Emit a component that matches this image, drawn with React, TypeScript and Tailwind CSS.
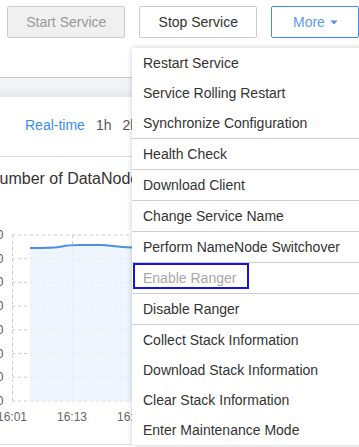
import React from "react";

const groups: string[][] = [
  ["Restart Service", "Service Rolling Restart", "Synchronize Configuration"],
  ["Health Check"],
  ["Download Client"],
  ["Change Service Name"],
  ["Perform NameNode Switchover"],
  ["Enable Ranger"],
  ["Disable Ranger"],
  ["Collect Stack Information", "Download Stack Information", "Clear Stack Information", "Enter Maintenance Mode"],
];

const gridY = [11, 34.7, 58.4, 82.1, 105.8, 129.5, 153.2, 177];
const yLabels = ["70", "60", "50", "40", "30", "20", "10", "0"];

function Chart() {
  return (
    <svg width="140" height="200" className="block">
      {gridY.map((y) => (
        <line key={y} x1="12" x2="140" y1={y} y2={y} stroke="#cccccc" strokeDasharray="3 3" />
      ))}
      {[12.5, 72.5, 132.5].map((x) => (
        <line key={x} x1={x} x2={x} y1="11" y2="177" stroke="#cccccc" strokeDasharray="3 3" />
      ))}
      <path
        d="M30 24 C45 24 55 24 62 22.5 S72 21 80 21 L100 21 C110 21 115 23 132 23.5 L140 23.5 L140 177 L30 177 Z"
        fill="#eaf2fd"
        fillOpacity="0.8"
      />
      <path
        d="M30 24 C45 24 55 24 62 22.5 S72 21 80 21 L100 21 C110 21 115 23 132 23.5 L140 23.5"
        fill="none"
        stroke="#4a90e2"
        strokeWidth="2"
      />
      {gridY.map((y, i) => (
        <text key={i} x="3.5" y={y + 4} textAnchor="end" fontSize="12" fill="#555555">
          {yLabels[i]}
        </text>
      ))}
      {[
        [12, "16:01"],
        [72, "16:13"],
        [132, "16:25"],
      ].map(([x, t]) => (
        <text key={t as string} x={x as number} y="197" textAnchor="middle" fontSize="12" fill="#666666">
          {t}
        </text>
      ))}
    </svg>
  );
}

function Menu() {
  return (
    <div className="absolute left-[132px] top-[48px] w-[240px] bg-white shadow-[0_0_6px_rgba(0,0,0,0.2)]">
      {groups.map((g, gi) => (
        <div key={gi} className={gi > 0 ? "border-t border-[#cfcfcf]" : ""}>
          {g.map((item) => {
            const disabled = item === "Enable Ranger";
            return (
              <div
                key={item}
                className={`relative h-[30px] flex items-center pl-[11px] text-[14px] ${
                  disabled ? "text-[#a8a8a8]" : "text-[#333333]"
                }`}
              >
                {item}
                {disabled && (
                  <span className="absolute left-[1px] top-[0px] w-[116px] h-[26px] border-2 border-[#1414e6]" />
                )}
              </div>
            );
          })}
        </div>
      ))}
    </div>
  );
}

export default function App() {
  return (
    <div className="relative w-[359px] h-[447px] overflow-hidden bg-white font-['Liberation_Sans',Arial,sans-serif]">
      <div className="h-[77px] border-b border-[#c8c8c8] box-content">
        <div className="flex gap-[14px] pl-[7px] pt-[6px]">
          <button className="w-[122px] h-[32px] rounded-[2px] border border-[#cccccc] bg-[#f0f0f0] text-[14px] text-[#999999]">
            Start Service
          </button>
          <button className="w-[121px] h-[32px] rounded-[2px] border border-[#cccccc] bg-white text-[14px] text-[#333333]">
            Stop Service
          </button>
          <button className="w-[88px] h-[32px] shrink-0 rounded-[2px] border border-[#3d8ef0] bg-white text-[14px] text-[#5a9cf7] flex items-center pl-[21px] gap-[5px]">
            More
            <svg width="8" height="5" viewBox="0 0 8 5">
              <path d="M0.5 0.5 L7.5 0.5 L4 4.5 Z" fill="#4a90e2" />
            </svg>
          </button>
        </div>
      </div>
      <div className="h-[19px] bg-gradient-to-b from-[#f4f5f7] via-[#f1f2f4] to-[#e7e8ea]" />
      <div className="h-[60px] pb-[2px] flex items-center gap-[11px] pl-[25px] text-[14px] border-b border-[#dddddd]">
        <span className="text-[#3c8cf0]">Real-time</span>
        <span className="text-[#555555]">1h</span>
        <span className="text-[#555555]">2h</span>
      </div>
      <div className="mt-[13px] ml-[-12px] text-[16px] leading-[18px] text-[#333333] whitespace-nowrap">
        Number of DataNodes
      </div>
      <div className="mt-[36px]">
        <Chart />
      </div>
      <div className="h-[21px] border-b border-[#dddddd]" />
      <Menu />
    </div>
  );
}
